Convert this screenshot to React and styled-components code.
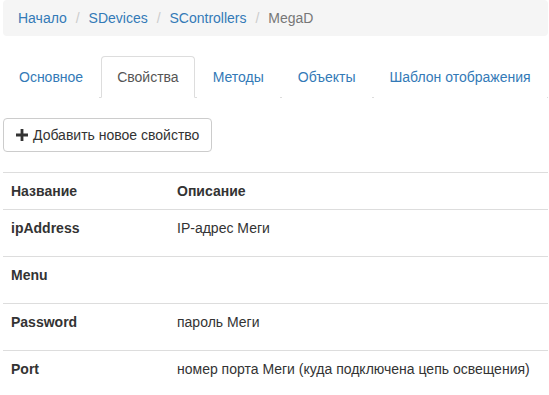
import React from "react";
import styled, { createGlobalStyle } from "styled-components";

const GlobalStyle = createGlobalStyle`
  * {
    box-sizing: border-box;
  }

  body {
    margin: 0;
    background: #fff;
    font-family: "Liberation Sans", Arial, sans-serif;
    font-size: 14px;
    line-height: 20px;
    color: #333;
  }
`;

const Page = styled.div`
  width: 545px;
  margin-left: 3px;
`;

const Breadcrumb = styled.ol`
  display: flex;
  gap: 4px;
  margin: 0 0 20px;
  padding: 8px 15px;
  list-style: none;
  background: #f5f5f5;
  border-radius: 4px;

  & > li + li::before {
    content: "/\\00a0";
    padding: 0 5px;
    color: #ccc;
  }
`;

const Crumb = styled.li`
  color: ${(props) => (props.$active ? "#777" : "#337ab7")};
`;

const Tabs = styled.ul`
  display: flex;
  margin: 0 0 20px;
  padding: 0;
  list-style: none;
  border-bottom: 1px solid #ddd;
`;

const Tab = styled.li`
  margin-bottom: -1px;
  margin-right: 2px;
  padding: 10px 15px;
  border: 1px solid ${(props) => (props.$active ? "#ddd" : "transparent")};
  border-bottom-color: transparent;
  border-radius: 4px 4px 0 0;
  background: #fff;
  color: ${(props) => (props.$active ? "#555" : "#337ab7")};
  white-space: nowrap;
`;

const Button = styled.button`
  display: inline-flex;
  align-items: center;
  gap: 5px;
  margin-bottom: 20px;
  padding: 6px 12px;
  font: inherit;
  line-height: 20px;
  color: #333;
  background: #fff;
  border: 1px solid #ccc;
  border-radius: 4px;
`;

const Table = styled.div`
  width: 100%;
`;

const Row = styled.div`
  display: grid;
  grid-template-columns: 166px 1fr;
  border-top: 1px solid #ddd;
`;

const Cell = styled.div`
  padding: 8px;
  min-height: ${(props) => (props.$tall ? "46px" : "36px")};
  font-weight: ${(props) => (props.$head ? "bold" : "normal")};
  white-space: nowrap;
`;

const PlusIcon = () => (
  <svg width="12" height="12" viewBox="0 0 12 12" aria-hidden="true">
    <path d="M4.6 0h2.8v4.6H12v2.8H7.4V12H4.6V7.4H0V4.6h4.6z" fill="#333" />
  </svg>
);

const crumbs = ["Начало", "SDevices", "SControllers", "MegaD"];
const tabs = ["Основное", "Свойства", "Методы", "Объекты", "Шаблон отображения"];
const properties = [
  ["ipAddress", "IP-адрес Меги"],
  ["Menu", ""],
  ["Password", "пароль Меги"],
  ["Port", "номер порта Меги (куда подключена цепь освещения)"],
];

export default function App() {
  return (
    <>
      <GlobalStyle />
      <Page>
        <Breadcrumb>
          {crumbs.map((c, i) => (
            <Crumb key={c} $active={i === crumbs.length - 1}>
              {c}
            </Crumb>
          ))}
        </Breadcrumb>

        <Tabs>
          {tabs.map((t) => (
            <Tab key={t} $active={t === "Свойства"}>
              {t}
            </Tab>
          ))}
        </Tabs>

        <Button>
          <PlusIcon />
          Добавить новое свойство
        </Button>

        <Table>
          <Row>
            <Cell $head>Название</Cell>
            <Cell $head>Описание</Cell>
          </Row>
          {properties.map(([name, desc]) => (
            <Row key={name}>
              <Cell $head $tall>
                {name}
              </Cell>
              <Cell $tall>{desc}</Cell>
            </Row>
          ))}
        </Table>
      </Page>
    </>
  );
}
